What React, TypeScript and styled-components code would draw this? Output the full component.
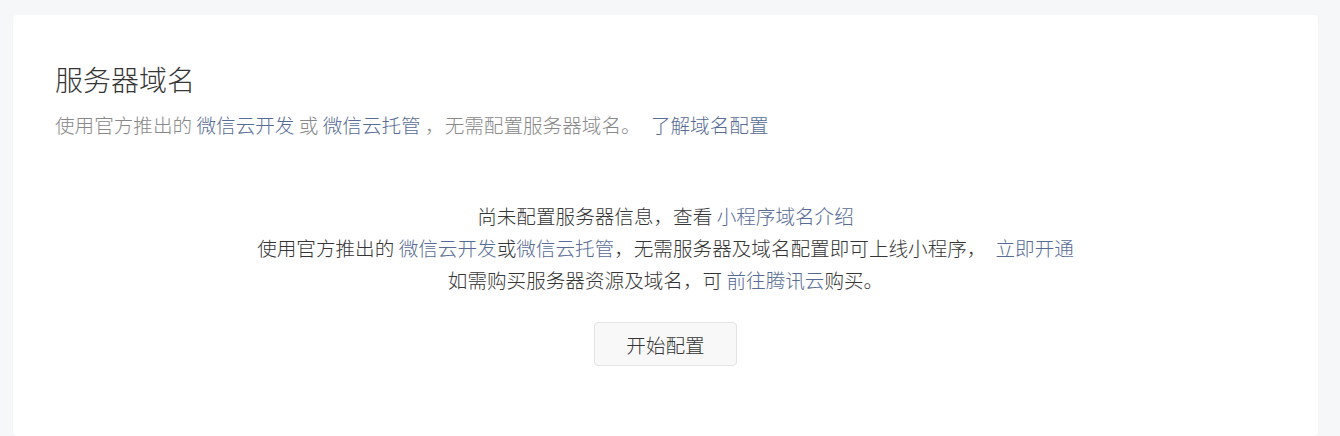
import React from "react";
import styled, { createGlobalStyle } from "styled-components";

const GlobalStyle = createGlobalStyle`
  body {
    margin: 0;
    background: #f6f7f9;
    font-family: "Noto Sans CJK SC", "Noto Sans", sans-serif;
    font-weight: 300;
    color: #353535;
  }
`;

function App() {
  return (
    <Page>
      <GlobalStyle />
      <Card>
        <Title>服务器域名</Title>
        <Desc>
          使用官方推出的 <Link href="#">微信云开发</Link> 或{" "}
          <Link href="#">微信云托管</Link> ，无需配置服务器域名。{" "}
          <Link href="#" $gap={6}>了解域名配置</Link>
        </Desc>
        <Empty>
          <Line>
            尚未配置服务器信息，查看 <Link href="#">小程序域名介绍</Link>
          </Line>
          <Line>
            使用官方推出的 <Link href="#">微信云开发</Link>或
            <Link href="#">微信云托管</Link>，无需服务器及域名配置即可上线小程序，
            <Link href="#" $gap={9}>立即开通</Link>
          </Line>
          <Line>
            如需购买服务器资源及域名，可 <Link href="#">前往腾讯云</Link>购买。
          </Line>
          <Button>开始配置</Button>
        </Empty>
      </Card>
    </Page>
  );
}

export default App;

const Page = styled.div`
  padding: 15px 22px 0 13px;
`;

const Card = styled.section`
  background: #fff;
  border-radius: 4px;
  box-shadow: 0 1px 2px rgba(0, 0, 0, 0.04);
  padding: 45px 42px 70px;
`;

const Title = styled.h2`
  margin: 0;
  font-size: 28px;
  line-height: 39px;
  font-weight: 300;
  color: #353535;
`;

const Desc = styled.p`
  margin: 12px 0 0;
  font-size: 19.6px;
  line-height: 28px;
  color: #888;
`;

const Link = styled.a<{ $gap?: number }>`
  color: #576b95;
  text-decoration: none;
  margin-left: ${(p) => (p.$gap ? `${p.$gap}px` : "0")};
`;

const Empty = styled.div`
  margin-top: 61px;
  display: flex;
  flex-direction: column;
  align-items: center;
  font-size: 19.6px;
  color: #353535;
`;

const Line = styled.div`
  line-height: 32px;
  text-align: center;
`;

const Button = styled.button`
  margin-top: 26px;
  width: 143px;
  height: 44px;
  border: 1px solid #e4e4e4;
  border-radius: 4px;
  background: #f8f8f8;
  color: #353535;
  font-family: inherit;
  font-weight: 300;
  font-size: 19.6px;
  cursor: pointer;
`;
